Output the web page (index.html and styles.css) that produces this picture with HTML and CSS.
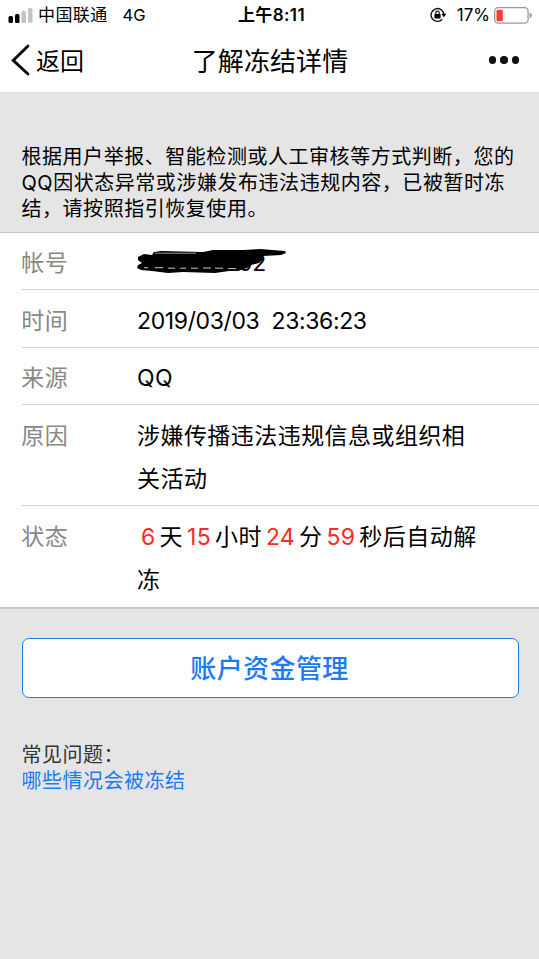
FILE: index.html
```html
<!DOCTYPE html>
<html lang="zh-CN">
<head>
    <meta charset="UTF-8">
    <meta name="viewport" content="width=device-width, initial-scale=1.0">
    <title>了解冻结详情</title>
    <link rel="stylesheet" href="styles.css">
</head>
<body>
    <header class="header">
        <div class="status-bar">
            <div class="status-left">
                <svg class="signal" width="25" height="15" viewBox="0 0 25 15">
                    <rect x="0.5" y="8" width="4.5" height="7" rx="1.5"/>
                    <rect x="7" y="6" width="4.5" height="9" rx="1.5"/>
                    <rect x="13.5" y="3" width="4.5" height="12" rx="1.5" fill="#c4c4c4"/>
                    <rect x="20" y="0" width="4.5" height="15" rx="1.5" fill="#c4c4c4"/>
                </svg>
                <span class="carrier">中国联通</span>
                <span class="network">4G</span>
            </div>
            <div class="clock">上午8:11</div>
            <div class="status-right">
                <svg width="17" height="16" viewBox="0 0 17 16">
                    <path d="M13.8 7A6.4 6.4 0 1 0 12.2 12.3" fill="none" stroke="#111" stroke-width="1.4"/>
                    <path d="M11.3 6.8H16.4L13.8 10.3Z"/>
                    <rect x="4.4" y="7" width="6.2" height="4.4" rx="0.6"/>
                    <path d="M5.8 7.2V5.8a1.7 1.7 0 0 1 3.4 0V7.2" fill="none" stroke="#111" stroke-width="1.2"/>
                </svg>
                <span class="percent">17%</span>
                <svg width="38" height="17" viewBox="0 0 38 17">
                    <rect x="0.7" y="0.7" width="33.4" height="15.4" rx="3.5" fill="none" stroke="#999" stroke-width="1.3"/>
                    <rect x="2.5" y="2.7" width="6.3" height="11.5" rx="1" fill="#fa3c32"/>
                    <path d="M35.6 5.5Q37.8 6 37.8 8.4T35.6 11.3Z" fill="#999"/>
                </svg>
            </div>
        </div>
        <nav class="nav-bar">
            <a class="back">
                <svg width="19" height="32" viewBox="0 0 19 32">
                    <path d="M17 2L2.2 16.4L17 30" fill="none" stroke="#000" stroke-width="2.8" stroke-linecap="round"/>
                </svg>
                <span>返回</span>
            </a>
            <h1>了解冻结详情</h1>
            <div class="more"><i></i><i></i><i></i></div>
        </nav>
    </header>

    <p class="intro">根据用户举报、智能检测或人工审核等方式判断，您的<br>QQ因状态异常或涉嫌发布违法违规内容，已被暂时冻<br>结，请按照指引恢复使用。</p>

    <div class="details">
        <div class="row">
            <span class="label">帐号</span>
            <div class="value account">
                <span>02</span>
                <svg class="scribble" width="150" height="26" viewBox="0 0 150 26">
                    <path d="M1 8L7 5L15 6L17 3L24 2L66 3L76 1L107 1L123 0L148 2L149 4L144 6L126 7L127 10L122 14L114 16L110 19L101 22L92 22L78 24L46 23L31 24L15 22L4 21L0 19L1 16L5 14L1 11Z"/>
                    <path d="M18 4.2H59" stroke="#fff" stroke-width="0.6"/>
                    <path d="M7 18.7H11M18 18.7H26M31 19.2H38M43 19.2H49M54 19.2H61M66 19H74M78 19.2H86M91 19.6H99" stroke="#ddd" stroke-width="0.9"/>
                </svg>
            </div>
        </div>
        <div class="row">
            <span class="label">时间</span>
            <div class="value date">2019/03/03&nbsp; 23:36:23</div>
        </div>
        <div class="row">
            <span class="label">来源</span>
            <div class="value">QQ</div>
        </div>
        <div class="row">
            <span class="label">原因</span>
            <div class="value">涉嫌传播违法违规信息或组织相<br>关活动</div>
        </div>
        <div class="row">
            <span class="label">状态</span>
            <div class="value"><em>6</em>天<em>15</em>小时<em>24</em>分<em>59</em>秒后自动解<br>冻</div>
        </div>
    </div>

    <button class="manage-btn">账户资金管理</button>

    <div class="faq">
        <div>常见问题：</div>
        <a>哪些情况会被冻结</a>
    </div>
</body>
</html>
```
FILE: styles.css
```css
* {
    box-sizing: border-box;
}

body {
    margin: 0;
    min-height: 959px;
    background-color: #e5e5e5;
    color: #000;
    font-family: Inter, "Noto Sans CJK SC", sans-serif;
}

.header {
    height: 93px;
    background-color: #fff;
    border-bottom: 1px solid #dedede;
}

.status-bar {
    display: grid;
    grid-template-columns: 1fr auto 1fr;
    align-items: center;
    height: 30px;
    padding: 0 7px 0 8px;
    font-size: 17px;
    line-height: 30px;
}

.status-left,
.status-right {
    display: flex;
    align-items: center;
}

.carrier {
    margin-left: 5px;
    letter-spacing: 0.4px;
}

.network {
    margin-left: 15px;
    font-size: 16.5px;
}

.clock {
    padding-left: 3px;
    font-weight: 600;
    letter-spacing: 0.4px;
}

.status-right {
    justify-content: flex-end;
}

.percent {
    margin: 0 4px 0 10px;
    font-size: 17px;
}

.nav-bar {
    display: grid;
    grid-template-columns: 1fr auto 1fr;
    align-items: center;
    height: 60px;
    padding: 0 11px;
}

.back {
    display: flex;
    align-items: center;
    font-size: 24px;
}

.back span {
    margin-left: 6px;
    padding-bottom: 2px;
}

.nav-bar h1 {
    margin: 0;
    padding: 0 0 2px 1px;
    font-size: 26px;
    font-weight: 400;
    letter-spacing: 0.1px;
}

.more {
    display: flex;
    justify-content: flex-end;
    gap: 4px;
    padding-right: 9px;
}

.more i {
    width: 7.5px;
    height: 7.5px;
    border-radius: 50%;
    background-color: #111;
}

.intro {
    height: 139px;
    margin: 0;
    padding: 51px 0 0 21.5px;
    font-size: 20px;
    letter-spacing: 0.54px;
    line-height: 26px;
    white-space: nowrap;
}

.details {
    padding-left: 22px;
    background-color: #fff;
    border-top: 1px solid #c8c8cc;
    border-bottom: 2px solid #c8c8c8;
}

.row {
    display: flex;
    padding: 9.4px 0 4.1px;
    border-bottom: 1px solid #d0d0d0;
    font-size: 23px;
    letter-spacing: 0.45px;
    line-height: 43px;
}

.row:last-child {
    padding: 10px 0 5px;
    border-bottom: none;
}

.label {
    width: 115px;
    margin-left: -0.7px;
    margin-right: 0.7px;
    color: #888;
}

.value {
    white-space: nowrap;
}

.date {
    letter-spacing: -0.38px;
}

.account {
    position: relative;
    padding-left: 101px;
    letter-spacing: -0.38px;
}

.scribble {
    position: absolute;
    left: 0;
    top: 7px;
}

.value em {
    margin: 0 4px;
    color: #fa2a24;
    font-style: normal;
    letter-spacing: 0.3px;
}

.manage-btn {
    display: block;
    width: 497px;
    height: 60px;
    margin: 29px 0 0 22px;
    padding: 0 2px 2px 0;
    border: 1.5px solid #1a7bf5;
    border-radius: 7px;
    background-color: #fff;
    color: #1a7bf5;
    font-family: inherit;
    font-size: 26px;
    font-weight: 500;
    letter-spacing: 0.4px;
}

.faq {
    padding: 44px 0 0 21.5px;
    color: #333;
    font-size: 20px;
    letter-spacing: 0.5px;
    line-height: 26px;
}

.faq a {
    color: #1a7bf5;
}
```
